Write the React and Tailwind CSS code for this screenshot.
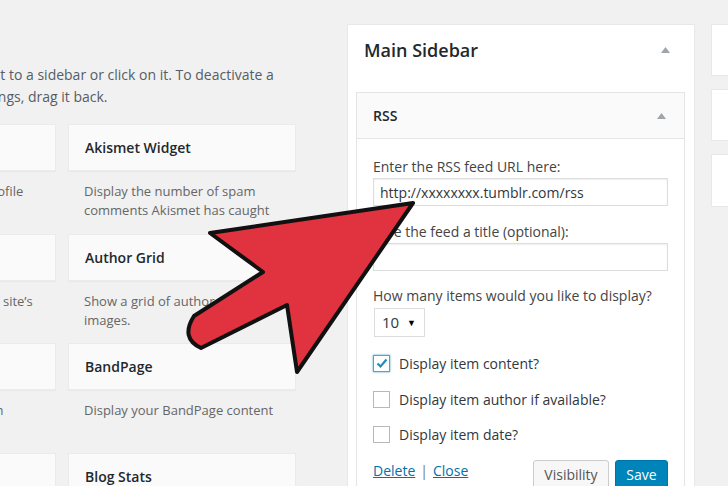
import React from 'react'

const WIDGETS = [
  { title: 'About Me', desc: 'Display your about.me profile' },
  { title: 'Akismet Widget', desc: 'Display the number of spam comments Akismet has caught' },
  { title: 'Archives', desc: "A monthly archive of your site’s Posts." },
  { title: 'Author Grid', desc: 'Show a grid of author avatar images.' },
  { title: 'Authors', desc: 'Display blogs authors with avatars an' },
  { title: 'BandPage', desc: 'Display your BandPage content' },
  { title: 'Blog Following', desc: 'Display your followed blogs.' },
  { title: 'Blog Stats', desc: 'Show a hit counter for your blog.' },
]

function Caret({ className = '' }) {
  return (
    <svg width="9" height="6" viewBox="0 0 9 6" className={className}>
      <path d="M0 6 L4.5 0 L9 6 Z" fill="#a0a5aa" />
    </svg>
  )
}

function Checkbox({ checked, label }) {
  return (
    <div className="flex items-center gap-[9px] h-[19px]">
      <div
        className={`w-[17px] h-[17px] bg-white border flex items-center justify-center ${
          checked ? 'border-[#5b9dd9] shadow-[0_0_2px_rgba(30,140,190,0.8)]' : 'border-[#b4b9be]'
        }`}
      >
        {checked && (
          <svg width="12" height="11" viewBox="0 0 12 11">
            <path d="M1.5 5.5 L4.5 8.5 L10.5 1.5" fill="none" stroke="#1e8cbe" strokeWidth="2.2" />
          </svg>
        )}
      </div>
      <span className="text-[14px] text-[#32373c]">{label}</span>
    </div>
  )
}

function Arrow() {
  return (
    <svg className="absolute inset-0 pointer-events-none" width="728" height="486" viewBox="0 0 728 486">
      <path
        d="M413 203 L210 233 L263 272 L194 316 Q180 338 201 348 L287 305 L297 372 Z"
        fill="#e0323f"
        stroke="#111"
        strokeWidth="4"
        strokeLinejoin="round"
      />
    </svg>
  )
}

export default function App() {
  return (
    <div className="relative w-[728px] h-[486px] overflow-hidden bg-[#f1f1f1] font-['Open_Sans',sans-serif]">
      <div className="flex items-start">
        {/* available widgets */}
        <div className="flex-none w-[347px] overflow-hidden">
          <div className="-ml-[172px] pt-[64px]">
            <p className="ml-[3px] whitespace-nowrap text-[14px] leading-[22px] text-[#555d66]">
              To activate a widget drag it to a sidebar or click on it. To deactivate a
              <br />
              widget and delete its settings, drag it back.
            </p>
            <div className="mt-[16px] grid grid-cols-[228px_228px] gap-x-[12px]">
              {WIDGETS.map((w) => (
                <div key={w.title} className="h-[109.5px]">
                  <div className="h-[47px] bg-[#fafafa] border border-[#ebebeb] shadow-[0_1px_1px_rgba(0,0,0,0.03)] flex items-center px-[16px] text-[14px] font-semibold text-[#23282d]">
                    {w.title}
                  </div>
                  <p className="mt-[11px] px-[16px] text-[13px] leading-[19px] text-[#666]">{w.desc}</p>
                </div>
              ))}
            </div>
          </div>
        </div>

        {/* main sidebar */}
        <div className="flex-none w-[348px] mt-[24px] bg-white border border-[#e8e8e8] pb-[40px]">
          <div className="h-[67px] pl-[16px] pr-[24px] pt-[13px]">
            <div className="flex items-center justify-between h-[24px]">
              <h2 className="text-[18px] font-semibold text-[#23282d]">Main Sidebar</h2>
              <Caret />
            </div>
          </div>
          <div className="ml-[8px] mr-[9px]">
            <div className="h-[47px] bg-[#fafafa] border border-[#e5e5e5] flex items-center justify-between pl-[16px] pr-[18px]">
              <span className="text-[14px] font-semibold text-[#23282d]">RSS</span>
              <Caret />
            </div>
            <div className="bg-white border-x border-b border-[#e5e5e5] px-[16px] pt-[18px] pb-[16px]">
              <p className="text-[14px] leading-[19px] text-[#444]">Enter the RSS feed URL here:</p>
              <div className="mt-[2px] h-[28px] border border-[#ddd] shadow-[inset_0_1px_2px_rgba(0,0,0,0.07)] flex items-center px-[6px] text-[14px] text-[#32373c]">
                http://xxxxxxxx.tumblr.com/rss
              </div>
              <p className="mt-[16px] text-[14px] leading-[19px] text-[#444]">Give the feed a title (optional):</p>
              <div className="mt-[2px] h-[28px] border border-[#ddd] shadow-[inset_0_1px_2px_rgba(0,0,0,0.07)]" />
              <p className="mt-[15px] text-[14px] leading-[19px] text-[#444]">How many items would you like to display?</p>
              <div className="mt-[3px] ml-[1px] w-[51px] h-[29px] border border-[#ddd] bg-white flex items-center justify-between pl-[7px] pr-[8px] text-[15px] text-[#32373c]">
                <span>10</span>
                <span className="text-[9px] text-black">▼</span>
              </div>
              <div className="mt-[17px] flex flex-col gap-[16.5px]">
                <Checkbox checked label="Display item content?" />
                <Checkbox label="Display item author if available?" />
                <Checkbox label="Display item date?" />
              </div>
              <div className="mt-[15.5px] flex items-start justify-between">
                <div className="text-[14px] leading-[19px] mt-[1px]">
                  <a className="text-[#0073aa] underline">Delete</a>
                  <span className="text-[#72777c] mx-[5px]">|</span>
                  <a className="text-[#0073aa] underline">Close</a>
                </div>
                <div className="flex gap-[6px]">
                  <button className="h-[30px] w-[76px] bg-[#f7f7f7] border border-[#ccc] rounded-[3px] text-[14px] text-[#555] shadow-[0_1px_0_#ccc]">
                    Visibility
                  </button>
                  <button className="h-[30px] w-[53px] bg-[#0085ba] border border-[#0073aa] rounded-[3px] text-[14px] text-white">
                    Save
                  </button>
                </div>
              </div>
            </div>
          </div>
        </div>

        {/* other sidebars */}
        <div className="flex-none ml-[16px] mt-[24px] flex flex-col gap-[13px]">
          <div className="w-[40px] h-[52px] bg-white border border-[#e8e8e8]" />
          <div className="w-[40px] h-[52px] bg-white border border-[#e8e8e8]" />
          <div className="w-[40px] h-[53px] bg-white border border-[#e8e8e8]" />
        </div>
      </div>
      <Arrow />
    </div>
  )
}
